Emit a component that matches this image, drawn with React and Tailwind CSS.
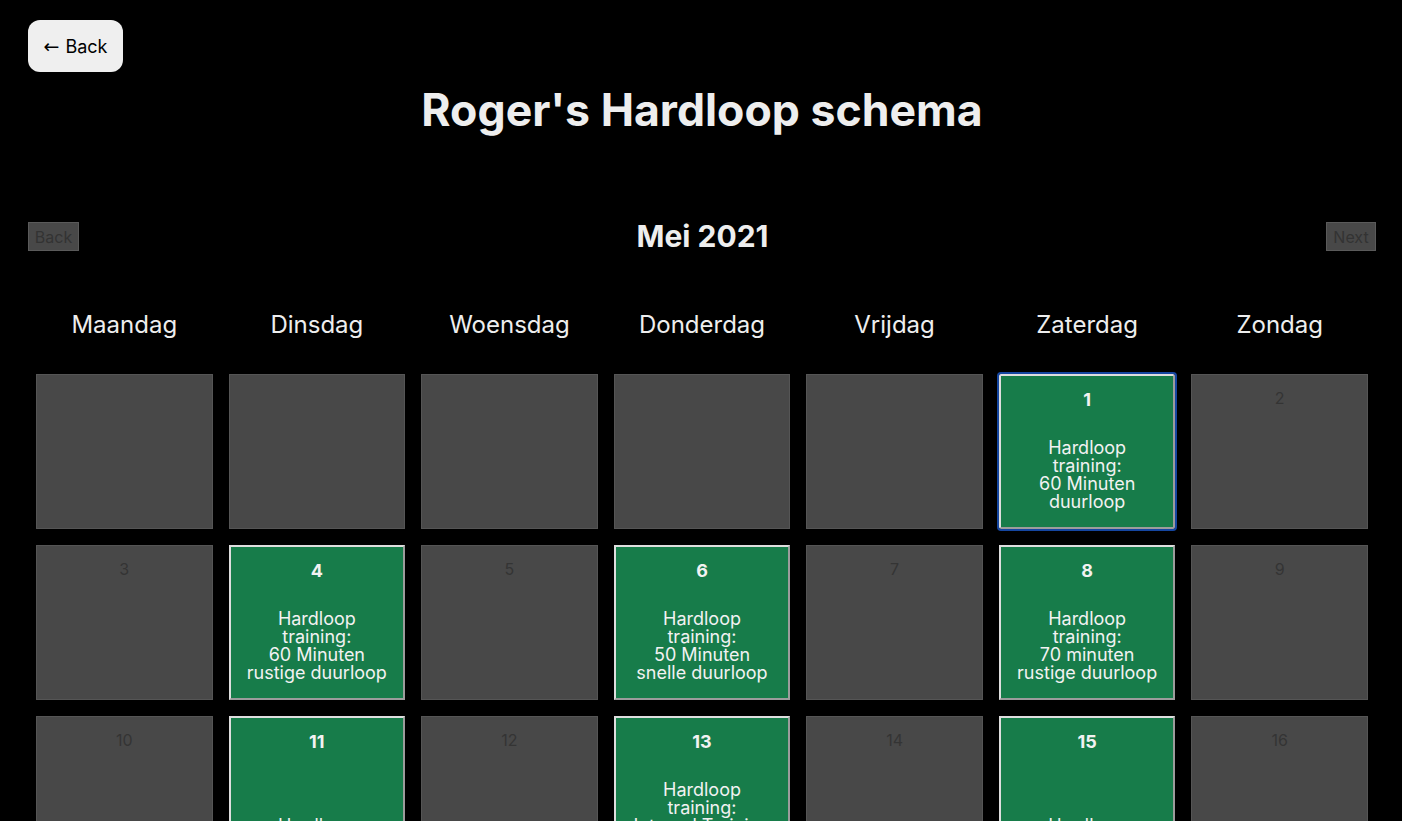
import React from 'react'

const days = ['Maandag', 'Dinsdag', 'Woensdag', 'Donderdag', 'Vrijdag', 'Zaterdag', 'Zondag']

const trainings = {
  1: ['Hardloop', 'training:', '60 Minuten', 'duurloop'],
  4: ['Hardloop', 'training:', '60 Minuten', 'rustige duurloop'],
  6: ['Hardloop', 'training:', '50 Minuten', 'snelle duurloop'],
  8: ['Hardloop', 'training:', '70 minuten', 'rustige duurloop'],
  11: ['Hardloop', 'training: 5 km'],
  13: ['Hardloop', 'training:', 'Interval Training', '6x 800 meter'],
  15: ['Hardloop', 'training: 5 km'],
  18: ['Hardloop', 'training:', '60 Minuten', 'rustige duurloop'],
  20: ['Hardloop', 'training:', '50 Minuten', 'snelle duurloop'],
  22: ['Hardloop', 'training:', '70 minuten', 'rustige duurloop'],
}

function DayCell({ day }) {
  if (!day) {
    return <div className="m-2 h-[155px] border border-[#555] bg-[#484848]" />
  }
  const lines = trainings[day]
  if (!lines) {
    return (
      <div className="m-2 h-[155px] border border-[#555] bg-[#484848] pt-[13px] text-center text-[16px] leading-[20px] text-[#343434]">
        {day}
      </div>
    )
  }
  const focused = day === 1
  return (
    <div
      className={
        'm-2 flex h-[155px] flex-col border-2 border-t-[#dedede] border-l-[#dedede] border-r-[#9c9c9c] border-b-[#9c9c9c] bg-[#177c4a] pt-[14px] pb-[16px] text-center text-[#f2f2f2] ' +
        (focused ? 'outline-2 outline-[#1546a0] rounded-[2px]' : '')
      }
    >
      <div className="text-[18px] font-bold leading-[20px]">{day}</div>
      <div className="flex flex-1 flex-col items-center justify-end text-[18px] leading-[18px]">
        {lines.map((l, i) => (
          <span key={i} className="whitespace-nowrap">{l}</span>
        ))}
      </div>
    </div>
  )
}

export default function App() {
  const cells = []
  for (let i = 0; i < 5; i++) cells.push(null)
  for (let d = 1; d <= 31; d++) cells.push(d)

  return (
    <div className="min-h-screen bg-black pl-7 pr-[26px] pt-5 font-['Inter',sans-serif] text-[#eeeeee]">
      <button
        type="button"
        className="flex h-[52px] w-[95px] items-center justify-center gap-[6px] rounded-[12px] bg-[#efefef] text-[18px] text-black"
      >
        <span className="font-['DejaVu_Sans',sans-serif] text-[19px] leading-none">←</span>
        <span>Back</span>
      </button>

      <h1 className="mt-[12px] text-center text-[44.6px] font-bold leading-[52px]">Roger's Hardloop schema</h1>

      <div className="mt-[86px] flex h-[29px] items-center justify-between">
        <button
          type="button"
          className="h-[29px] w-[51px] border border-[#5a5a5a] bg-[#484848] text-[16px] text-[#333]"
        >
          Back
        </button>
        <h2 className="text-[30px] font-bold leading-[29px]">Mei 2021</h2>
        <button
          type="button"
          className="h-[29px] w-[50px] border border-[#5a5a5a] bg-[#484848] text-[16px] text-[#333]"
        >
          Next
        </button>
      </div>

      <div className="mt-[50px] grid h-12 grid-cols-7 items-center">
        {days.map((d) => (
          <div key={d} className="text-center text-[24px] leading-[48px]">{d}</div>
        ))}
      </div>

      <div className="mt-[17px] grid grid-cols-7 pb-8">
        {cells.map((d, i) => (
          <DayCell key={i} day={d} />
        ))}
      </div>
    </div>
  )
}
